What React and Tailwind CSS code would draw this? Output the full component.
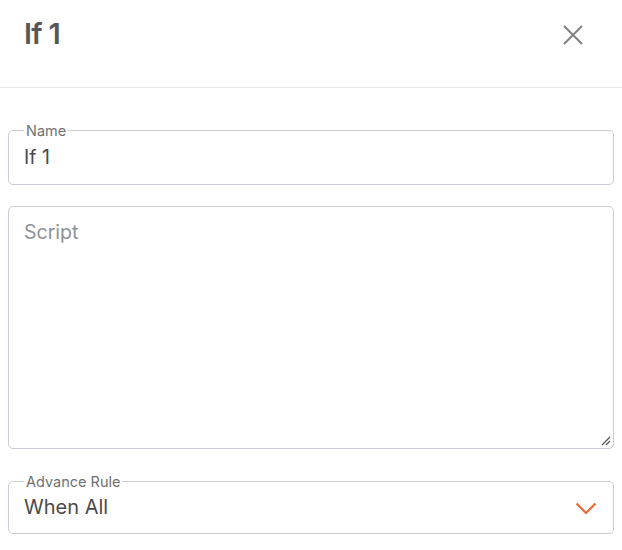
const font = { fontFamily: 'Inter, "Noto Sans", sans-serif' }

function Field({ label, className, children }) {
  return (
    <div className={`relative border border-[#c9ccd4] rounded-[5px] ${className}`}>
      {label && (
        <span className="absolute left-[15px] -top-[9px] bg-white px-[2px] text-[14.5px] leading-[18px] text-[#707070]">
          {label}
        </span>
      )}
      {children}
    </div>
  )
}

export default function App() {
  return (
    <div className="w-[622px] h-[550px] bg-white overflow-hidden text-[#555]" style={font}>
      <div className="h-[88px] border-b border-[#e6e6ec] flex items-start justify-between pl-6 pr-[39px] pt-[17px]">
        <h1 className="text-[29px] leading-[34px] font-semibold text-[#575757] tracking-tight">If 1</h1>
        <svg className="mt-[8px]" width="20" height="20" viewBox="0 0 20 20">
          <path d="M1 1 L19 19 M19 1 L1 19" stroke="#808080" strokeWidth="2" />
        </svg>
      </div>

      <div className="px-2 pt-[42px] flex flex-col">
        <Field label="Name" className="h-[55px] flex items-center px-[15px]">
          <span className="text-[19.5px] text-[#4a4a4a] mt-[1px]">If 1</span>
        </Field>

        <Field className="mt-[21px] h-[243px] px-[15px] pt-[11px]">
          <div className="text-[19.5px] text-[#8e9196]">Script</div>
          <svg className="absolute right-[2px] bottom-[2px]" width="10" height="10" viewBox="0 0 10 10">
            <path d="M1 9 L9 1 M5 9 L9 5" stroke="#555" strokeWidth="1.2" />
          </svg>
        </Field>

        <Field label="Advance Rule" className="mt-[32px] h-[53px] flex items-center justify-between px-[15px]">
          <span className="text-[20px] text-[#4a4a4a] -mt-[1px]">When All</span>
          <svg className="mr-[1px] mt-[1px]" width="22" height="13" viewBox="0 0 22 13">
            <path d="M1.5 1.5 L11 11 L20.5 1.5" fill="none" stroke="#ea6a38" strokeWidth="2.2" />
          </svg>
        </Field>
      </div>
    </div>
  )
}
